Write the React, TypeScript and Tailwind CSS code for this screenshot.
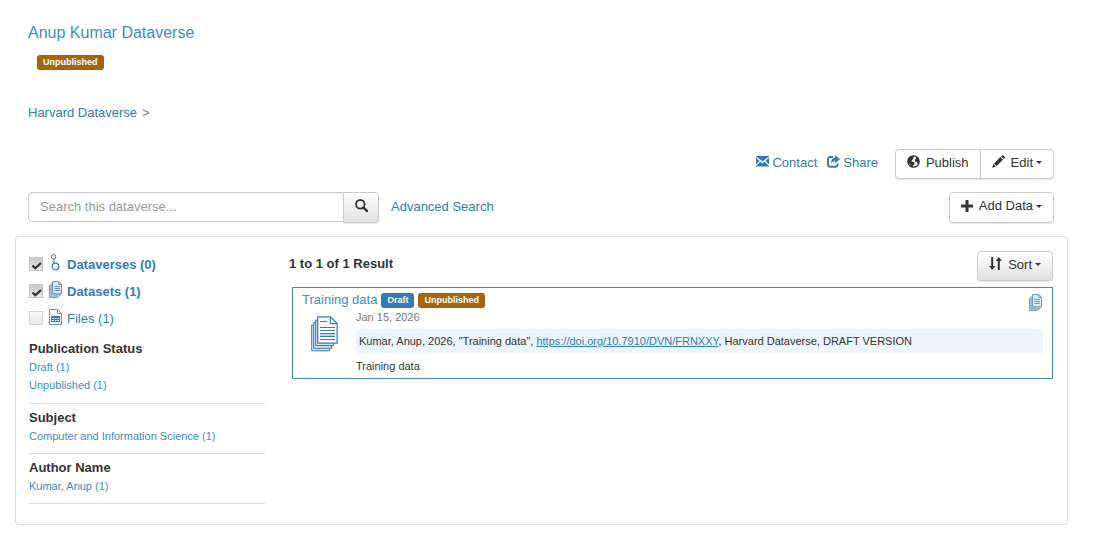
import type { ReactNode } from 'react';

type IconProps = { className?: string };

const EnvelopeIcon = ({ className }: IconProps) => (
  <svg viewBox="0 0 13 11" className={className} fill="currentColor" aria-hidden="true">
    <path d="M0 0h13v.4L6.500 5.600 0 .4z" />
    <path d="M0 1.800 3.600 4.900 0 8.400zM13 1.800 9.400 4.900 13 8.400z" />
    <path d="M0 10 4.400 5.700l2.100 1.700 2.100-1.700L13 10v.6H0z" />
  </svg>
);

const ShareIcon = ({ className }: IconProps) => (
  <svg viewBox="0 0 13 13" className={className} aria-hidden="true">
    <path d="M6 2H3.2Q1 2 1 4.2v5.3q0 2.3 2.2 2.3h5.2q2.2 0 2.2-2.2V8.6" fill="none" stroke="currentColor" strokeWidth="1.9" />
    <path d="M8.2 0 13 4.2 8.2 8.3V6.1Q5.4 6 4 8.6 4 3 8.2 2.4z" fill="currentColor" />
  </svg>
);

const GlobeIcon = ({ className }: IconProps) => (
  <svg viewBox="0 0 13 13" className={className} aria-hidden="true">
    <circle cx="6.5" cy="6.5" r="5.7" fill="#fff" stroke="currentColor" strokeWidth="1.2" />
    <path
      d="M.8 6 1.500 3 4 1.100 6.800.8 7.200 2 5.800 2.800l.8 1L5 5l-.6 1.400 2 .3 1.400 1.400-.6 1.600-1.500 1 .2 1.500-2-.6L3.200 9.500 1.200 8zM8.400 1.200l2.600 1.500 1.300 2.800-.3 2.800-1.300.7-.8-2-1.800-.4-.3-1.800 1.400-1.200z"
      fill="currentColor"
    />
  </svg>
);

const PencilIcon = ({ className }: IconProps) => (
  <svg viewBox="0 0 13 13" className={className} fill="currentColor" aria-hidden="true">
    <path d="M.2 12.8 1.4 9l2.6 2.6zM2 8.4l6.3-6.3 2.6 2.6L4.6 11zM9 1.4 10.1.4q.6-.5 1.2 0l1.4 1.4q.5.6 0 1.1L11.6 4z" />
  </svg>
);

const PlusIcon = ({ className }: IconProps) => (
  <svg viewBox="0 0 12 12" className={className} fill="currentColor" aria-hidden="true">
    <path d="M5 0h2q.5 0 .5.5v4h4q.5 0 .5.5v2q0 .5-.5.5h-4v4q0 .5-.5.5H5q-.5 0-.5-.5v-4h-4Q0 7.500 0 7V5q0-.5.5-.5h4v-4Q4.500 0 5 0z" />
  </svg>
);

const SearchIcon = ({ className }: IconProps) => (
  <svg viewBox="0 0 13 13" className={className} fill="none" stroke="currentColor" aria-hidden="true">
    <circle cx="5.300" cy="5.300" r="4.300" strokeWidth="1.800" />
    <path d="m8.500 8.500 3.600 3.600" strokeWidth="2.400" strokeLinecap="round" />
  </svg>
);

const SortIcon = ({ className }: IconProps) => (
  <svg viewBox="0 0 13 13" className={className} fill="currentColor" aria-hidden="true">
    <path d="M2.200 0h2v9h2.100L3.200 13 0 9h2.200zM8.800 13h2V4H13L9.800 0 6.700 4h2.100z" />
  </svg>
);

const DataverseIcon = ({ className }: IconProps) => (
  <svg viewBox="0 0 10 17" className={className} fill="none" stroke="#337ab7" aria-hidden="true">
    <circle cx="3.500" cy="2.800" r="2.200" strokeWidth="1" />
    <path d="M4 5v4.500" strokeWidth="1.100" />
    <circle cx="5.500" cy="12.500" r="3.300" strokeWidth="1.300" />
  </svg>
);

const DatasetIcon = ({ className, tone = '#5f93c4', fill = '#9dbddc' }: IconProps & { tone?: string; fill?: string }) => (
  <svg viewBox="0 0 13 17" className={className} aria-hidden="true">
    <path d="M0 4.500 4 .5v12.300h6L8 16.700H0z" fill={fill} />
    <path d="M4 12.800h8.500L9.500 16H8z" fill={fill} />
    <path d="M.4 4.500v12h8.200l3.700-3.700" fill="none" stroke={tone} strokeWidth=".8" />
    <path d="M3.500 .6h6.500l2.500 2.600v9.600h-9z" fill="#dce9f5" stroke={tone} />
    <path d="M9.800.8v2.600h2.500" fill="none" stroke={tone} />
    <path d="M5.500 5.500h5.500M5.500 7.500h5.500M5.500 9.500h5.500" stroke={tone} />
  </svg>
);

const FileIcon = ({ className }: IconProps) => (
  <svg viewBox="0 0 13 16" className={className} aria-hidden="true">
    <path d="M.5.5h8l4 4v11H.5z" fill="#fff" stroke="#5b93c5" />
    <path d="M8.500.5v4h4" fill="none" stroke="#5b93c5" />
    <path d="M2 7h9v6H2z" fill="#337ab7" />
    <path d="M3 9h2v1H3zm3 0h1.500v1H6zm2.500 0h1.500v1H8.500zM3 11h2v1H3zm3 0h1.500v1H6zm2.500 0h1.500v1H8.500z" fill="#fff" />
  </svg>
);

const LargeDatasetIcon = ({ className }: IconProps) => (
  <svg viewBox="0 0 27 36" className={className} fill="#d3e8f4" stroke="#3a78b8" aria-hidden="true">
    <path d="M.7 9h18v25.800H.7z" />
    <path d="M2.700 6.500h18v25.800h-18z" />
    <path d="M4.700 4h18v25.500h-18z" />
    <path d="M6.700.8h12.600l6.800 6.800v19.500H6.700z" fill="#fff" strokeWidth="1.200" />
    <path d="M19.300.8v6.800h6.800" fill="none" strokeWidth="1.200" />
    <path d="M9 18.500h15" stroke="#b5d6ee" strokeWidth="3" />
    <path d="M9 5.500h7M9 11.500h15M9 14.500h15M9 17.500h15M9 20.500h15M9 23.500h15" />
  </svg>
);

const Caret = () => (
  <span className="ml-[3px] inline-block border-x-[3px] border-t-[3px] border-x-transparent border-t-[#333]" />
);

const Badge = ({ children, draft = false }: { children: ReactNode; draft?: boolean }) => (
  <span
    className={`inline-flex h-[15px] items-center rounded-[3px] px-[6px] text-[9px] leading-[15px] font-bold text-white ${
      draft ? 'bg-[#337ab7]' : 'bg-[#a4650f]'
    }`}
  >
    {children}
  </span>
);

const buttonBase = 'flex items-center border border-[#ccc] pb-[3px] shadow-[0_1px_1px_rgba(0,0,0,0.1)]';

type TypeFilter = { id: string; label: string; checked: boolean; icon: ReactNode };

const typeFilters: TypeFilter[] = [
  { id: 'dataverses', label: 'Dataverses (0)', checked: true, icon: <DataverseIcon className="h-[17px] w-[10px]" /> },
  { id: 'datasets', label: 'Datasets (1)', checked: true, icon: <DatasetIcon className="h-[17px] w-[13px]" /> },
  { id: 'files', label: 'Files (1)', checked: false, icon: <FileIcon className="h-[16px] w-[13px]" /> },
];

const facets = [
  { title: 'Publication Status', values: ['Draft (1)', 'Unpublished (1)'] },
  { title: 'Subject', values: ['Computer and Information Science (1)'] },
  { title: 'Author Name', values: ['Kumar, Anup (1)'] },
];

function TypeFilterRow({ filter }: { filter: TypeFilter }) {
  return (
    <div className="flex h-[27px] items-center">
      <span className="mb-[2px] grid h-[14px] w-[14px] shrink-0">
        <input
          type="checkbox"
          id={filter.id}
          defaultChecked={filter.checked}
          className="peer col-start-1 row-start-1 h-[14px] w-[14px] appearance-none border border-[#d3d3d3] bg-linear-to-b from-[#fafafa] to-[#e6e6e6] checked:border-[#c4c4c4] checked:from-[#c8c8c8] checked:to-[#e6e6e6]"
        />
        <svg
          viewBox="0 0 14 14"
          className="pointer-events-none col-start-1 row-start-1 hidden h-[14px] w-[14px] peer-checked:block"
          fill="none"
          stroke="#333"
          strokeWidth="2.200"
          aria-hidden="true"
        >
          <path d="m3.500 8.500 2.800 2.800L12 6" />
        </svg>
      </span>
      <label htmlFor={filter.id} className="flex items-center text-[#337ab7]">
        <span className="flex w-6 justify-center pb-[4px]">{filter.icon}</span>
        <span className={filter.checked ? 'font-bold' : ''}>{filter.label}</span>
      </label>
    </div>
  );
}

function Result() {
  return (
    <article className="mt-[6px] ml-[3px] border border-[#428bca] px-[9px] pt-[2px] pb-[3px]">
      <div className="flex h-5 items-center gap-1">
        <a href="#training-data" className="text-[#428bca]">
          Training data
        </a>
        <Badge draft>Draft</Badge>
        <Badge>Unpublished</Badge>
        <DatasetIcon className="mt-1 mr-px ml-auto h-[17px] w-[13px]" tone="#6f9db8" fill="#9fbccd" />
      </div>
      <div className="flex text-[11px]">
        <div className="w-[54px] shrink-0 pt-[6px] pl-[9px]">
          <LargeDatasetIcon className="h-[36px] w-[27px]" />
        </div>
        <div className="min-w-0 flex-1">
          <p className="leading-[15px] text-[#777]">Jan 15, 2026</p>
          <p className="my-1 bg-[#ecf5fc] px-[3px] py-[3px] leading-[18px]">
            Kumar, Anup, 2026, "Training data",{' '}
            <a href="https://doi.org/10.7910/DVN/FRNXXY" className="text-[#337ab7] underline">
              https://doi.org/10.7910/DVN/FRNXXY
            </a>
            , Harvard Dataverse, DRAFT VERSION
          </p>
          <p className="leading-[18px]">Training data</p>
        </div>
      </div>
    </article>
  );
}

export default function App() {
  return (
    <div className="bg-white pt-[23px] pr-9 pb-7 pl-[15px] font-['Liberation_Sans',Arial,sans-serif] text-[13px] leading-[18px] text-[#333]">
      <header className="pl-[13px]">
        <h1 className="text-base leading-5">
          <a href="#dataverse" className="text-[#428bca]">
            Anup Kumar Dataverse
          </a>
        </h1>
        <div className="mt-3 flex pl-[9px]">
          <Badge>Unpublished</Badge>
        </div>
        <nav aria-label="Breadcrumb" className="mt-[34px] flex gap-[5px]">
          <a href="#harvard" className="text-[#337ab7]">
            Harvard Dataverse
          </a>
          <span className="text-[#777]">&gt;</span>
        </nav>
      </header>

      <div className="mt-[27px] flex items-center justify-end pr-[14px]">
        <a href="#contact" className="flex items-center gap-[3px] pb-[3px] text-[#337ab7]">
          <EnvelopeIcon className="mb-[2px] h-[11px] w-[13px]" />
          Contact
        </a>
        <a href="#share" className="ml-[10px] flex items-center gap-[3px] pb-[3px] text-[#337ab7]">
          <ShareIcon className="mb-[2px] h-[13px] w-[13px]" />
          Share
        </a>
        <div className="ml-[17px] flex">
          <button type="button" className={`${buttonBase} h-[30px] rounded-l-[4px] bg-white px-[11px]`}>
            <GlobeIcon className="mr-[6px] mb-[2px] h-[13px] w-[13px]" />
            Publish
          </button>
          <button type="button" className={`${buttonBase} -ml-px h-[30px] rounded-r-[4px] bg-white px-[11px]`}>
            <PencilIcon className="mr-[6px] mb-[2px] h-[13px] w-[13px]" />
            Edit
            <Caret />
          </button>
        </div>
      </div>

      <div className="mt-[13px] flex items-start pr-[14px] pl-[13px]">
        <form className="flex items-start" onSubmit={(event) => event.preventDefault()}>
          <input
            type="text"
            aria-label="Search this dataverse"
            placeholder="Search this dataverse..."
            className="h-[30px] w-[316px] rounded-l-[4px] border border-[#ccc] px-[11px] pb-[2px] shadow-[inset_0_1px_1px_rgba(0,0,0,0.075)] placeholder:text-[#999]"
          />
          <button
            type="submit"
            aria-label="Search"
            className={`${buttonBase} -ml-px h-[31px] w-9 justify-center rounded-r-[4px] bg-linear-to-b from-white to-[#e0e0e0]`}
          >
            <SearchIcon className="mb-[2px] h-[13px] w-[13px]" />
          </button>
        </form>
        <a href="#advanced" className="mt-[6px] ml-3 text-[#337ab7]">
          Advanced Search
        </a>
        <button type="button" className={`${buttonBase} ml-auto h-[31px] rounded-[4px] bg-white px-[11px]`}>
          <PlusIcon className="mr-[6px] h-[12px] w-[12px]" />
          Add Data
          <Caret />
        </button>
      </div>

      <main className="mt-[13px] flex gap-6 rounded-[4px] border border-[#ddd] pt-[14px] pr-[14px] pb-5 pl-[13px]">
        <aside className="w-[236px] shrink-0">
          {typeFilters.map((filter) => (
            <TypeFilterRow key={filter.id} filter={filter} />
          ))}
          <div className="mt-[3px]">
            {facets.map((facet) => (
              <section key={facet.title} className="border-b border-[#ddd] pt-[5px] pb-2 first:pb-[9px]">
                <h2 className="font-bold">{facet.title}</h2>
                <ul className="text-[11px] text-[#428bca]">
                  {facet.values.map((value) => (
                    <li key={value}>
                      <a href="#facet">{value}</a>
                    </li>
                  ))}
                </ul>
              </section>
            ))}
          </div>
        </aside>
        <section className="min-w-0 flex-1">
          <div className="flex items-center justify-between">
            <h2 className="pb-1 font-bold">1 to 1 of 1 Result</h2>
            <button
              type="button"
              className={`${buttonBase} h-[30px] rounded-[4px] bg-linear-to-b from-white to-[#e0e0e0] px-[11px]`}
            >
              <SortIcon className="mr-[6px] mb-[2px] h-[13px] w-[13px]" />
              Sort
              <Caret />
            </button>
          </div>
          <Result />
        </section>
      </main>
    </div>
  );
}
